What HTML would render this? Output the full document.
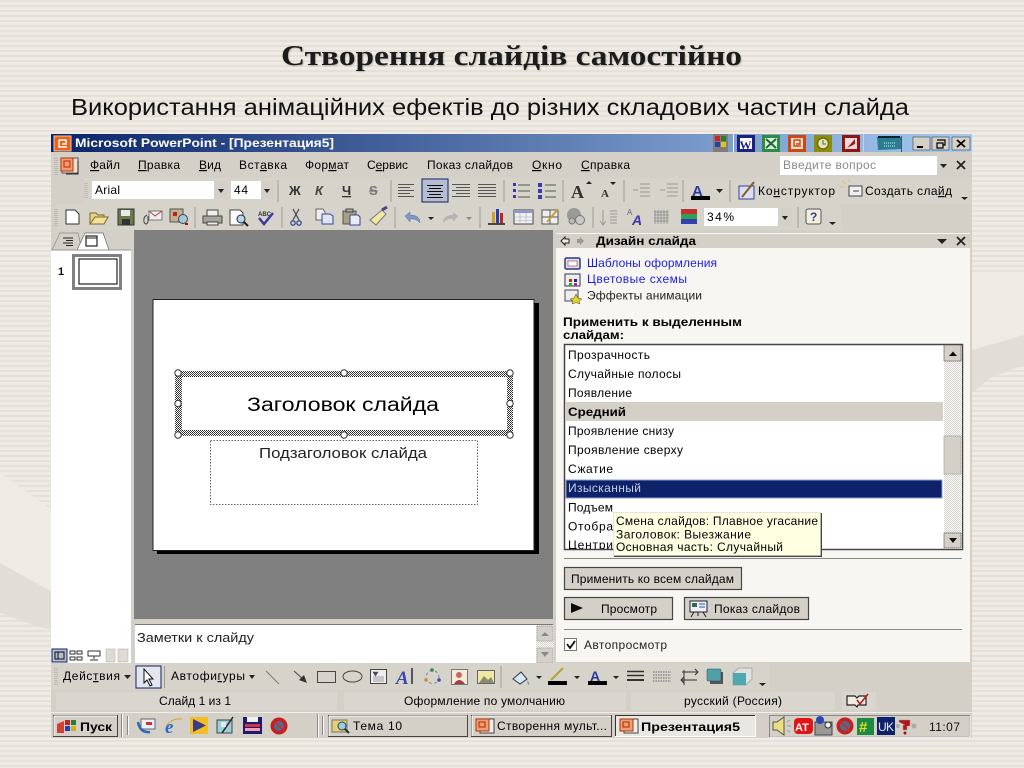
<!DOCTYPE html>
<html><head><meta charset="utf-8"><title>Створення слайдів самостійно</title>
<style>
html,body{margin:0;padding:0;background:#eae6df;width:1024px;height:768px;overflow:hidden}
svg{display:block}
text{font-family:"Liberation Sans","DejaVu Sans",sans-serif;white-space:pre}
.u text{font-size:12px;fill:#000}
</style></head><body>
<svg width="1024" height="768" viewBox="0 0 1024 768" xmlns="http://www.w3.org/2000/svg">
<defs>
<pattern id="st" width="5" height="5" patternUnits="userSpaceOnUse"><rect width="5" height="5" fill="#efebe4"/><rect y="0" width="5" height="2" fill="#e5e0d8"/></pattern>
<pattern id="ht" width="2" height="2" patternUnits="userSpaceOnUse"><rect width="2" height="2" fill="#fff"/><rect width="1" height="1" fill="#222"/><rect x="1" y="1" width="1" height="1" fill="#444"/></pattern>
<pattern id="dt" width="2" height="2" patternUnits="userSpaceOnUse"><rect width="2" height="2" fill="#fff"/><rect width="1" height="1" fill="#d4d0c8"/><rect x="1" y="1" width="1" height="1" fill="#d4d0c8"/></pattern>
<linearGradient id="tb"><stop offset="0" stop-color="#0a246a"/><stop offset="1" stop-color="#a6caf0"/></linearGradient>
<filter id="b" x="0" y="0" width="100%" height="100%"><feGaussianBlur stdDeviation="0.3"/></filter>
<filter id="ts" x="-5%" y="-20%" width="110%" height="140%"><feDropShadow dx="1" dy="1" stdDeviation="0.5" flood-color="#000" flood-opacity=".2"/></filter>
</defs>

<rect width="1024" height="768" fill="url(#st)"/>
<path d="M0 473L52 510V592L0 563Z" fill="#efebe4"/>
<path d="M0 563L52 592V630L36 626L0 613Z" fill="#e2ddd6"/>
<path d="M972 273H1024V335L972 350Z" fill="#efebe4"/>
<path d="M972 350L1024 335V365L990 378L972 393Z" fill="#e2ddd6"/>

<text x="281" y="65" textLength="461" lengthAdjust="spacingAndGlyphs" style="font-family:'Liberation Serif',serif;font-size:29px;font-weight:bold;fill:#1c1c1c" filter="url(#ts)">Створення слайдів самостійно</text>
<text x="71" y="115" textLength="838" lengthAdjust="spacingAndGlyphs" style="font-size:23.5px;fill:#111">Використання анімаційних ефектів до різних складових частин слайда</text>

<g class="u" filter="url(#b)">
<!-- window -->
<rect x="51" y="134" width="921" height="604" fill="#d4d0c8"/>
<rect x="51" y="134" width="921" height="18" fill="url(#tb)"/>
<rect x="54" y="136" width="17" height="15" fill="#e8641c" stroke="#f5c9a0"/><path d="M59 140V147H67M59 140H66V144H62" fill="none" stroke="#fff" stroke-width="1.4"/>
<text x="75" y="147" textLength="259" lengthAdjust="spacingAndGlyphs" style="font-size:12px;font-weight:bold;fill:#fff">Microsoft PowerPoint - [Презентация5]</text>

<rect x="713" y="134" width="15" height="18" fill="#807d78"/><rect x="715" y="136" width="5" height="5" fill="#d02020"/><rect x="721" y="136" width="5" height="5" fill="#208030"/><rect x="715" y="142" width="5" height="5" fill="#2040b0"/><rect x="721" y="142" width="5" height="5" fill="#e0c020"/>
<rect x="733" y="134" width="1" height="18" fill="#fff"/>
<rect x="737" y="135" width="18" height="17" fill="#1a237e"/><rect x="740" y="138" width="12" height="11" fill="#fff"/><text x="739.5" y="149" style="font-size:12px;font-weight:bold;fill:#1a237e;font-family:'Liberation Serif',serif">W</text>
<rect x="762" y="135" width="18" height="17" fill="#2e8b47"/><rect x="765" y="138" width="12" height="11" fill="#dceedd"/><path d="M766 139L776 148M776 139L766 148" stroke="#1d6b34" stroke-width="2"/>
<rect x="788" y="135" width="18" height="17" fill="#c84a16"/><rect x="791" y="138" width="12" height="11" fill="#f4ddc8"/><path d="M794 140V146H801M794 140H800V144H796" fill="none" stroke="#c84a16" stroke-width="1.4"/>
<rect x="814" y="135" width="18" height="17" fill="#8c8c10"/><circle cx="823" cy="143.5" r="5.5" fill="#e4e4c0" stroke="#6c6c10" stroke-width="1.5"/><path d="M823 140V144H826" stroke="#6c6c10" fill="none"/>
<rect x="842" y="135" width="18" height="17" fill="#8a1212"/><rect x="845" y="138" width="12" height="11" fill="#f2d8d8"/><path d="M847 148L855 139L855 144Z" fill="#a01818"/>
<rect x="863" y="134" width="1" height="18" fill="#cfe0f2" opacity=".7"/>
<path d="M877 137H901V149L878 150Z" fill="#2a7e90"/><rect x="878" y="136" width="22" height="2" fill="#123"/><path d="M884 143H895M884 146H895" stroke="#cfe" stroke-dasharray="1 1"/><rect x="901" y="136" width="1" height="16" fill="#456"/>
<g fill="#d4d0c8" stroke="#404040" stroke-width=".6"><rect x="913" y="137" width="17" height="13"/><rect x="932" y="137" width="17" height="13"/><rect x="952" y="137" width="18" height="13"/></g>
<path d="M917 147H923" stroke="#000" stroke-width="2"/><path d="M937 140H945V145H943M937 143H943V148H937Z" fill="none" stroke="#000" stroke-width="1.2"/><path d="M957 140L965 147M965 140L957 147" stroke="#000" stroke-width="1.8"/>

<!-- menu bar -->
<path d="M55 158V175M57 158V175" stroke="#a8a49c" stroke-dasharray="1 1"/>
<rect x="62" y="158" width="16" height="15" fill="#f6e0d0" stroke="#555"/><rect x="61" y="158" width="12" height="13" fill="#f0a070" stroke="#b03010"/><rect x="64" y="161" width="6" height="6" fill="none" stroke="#c02010"/><path d="M78 161V174H66" stroke="#222" fill="none"/>
<text x="90" y="169" textLength="30"><tspan text-decoration="underline">Ф</tspan>айл</text>
<text x="138" y="169" textLength="42"><tspan text-decoration="underline">П</tspan>равка</text>
<text x="199" y="169" textLength="22"><tspan text-decoration="underline">В</tspan>ид</text>
<text x="239" y="169" textLength="48">Вст<tspan text-decoration="underline">а</tspan>вка</text>
<text x="305" y="169" textLength="44">Фор<tspan text-decoration="underline">м</tspan>ат</text>
<text x="367" y="169" textLength="41">С<tspan text-decoration="underline">е</tspan>рвис</text>
<text x="427" y="169" textLength="86">Показ слай<tspan text-decoration="underline">д</tspan>ов</text>
<text x="532" y="169" textLength="30"><tspan text-decoration="underline">О</tspan>кно</text>
<text x="581" y="169" textLength="49"><tspan text-decoration="underline">С</tspan>правка</text>
<rect x="780" y="156" width="157" height="19" fill="#fff"/>
<text x="783" y="169" textLength="93" style="fill:#8a8a8a">Введите вопрос</text>
<rect x="937" y="156" width="13" height="19" fill="#d4d0c8"/><path d="M940 164H947L943.500 168Z" fill="#222"/>
<path d="M957 161L965 169M965 161L957 169" stroke="#222" stroke-width="1.8"/>

<!-- toolbar 2 -->
<rect x="84" y="178" width="888" height="26" fill="#d6d3cb"/>
<path d="M85 183V199M87 183V199" stroke="#a8a49c" stroke-dasharray="1 1"/>
<rect x="92" y="181" width="136" height="18" fill="#fff"/><text x="95" y="194" textLength="25">Arial</text>
<rect x="214" y="181" width="14" height="18" fill="#d4d0c8"/><path d="M218 189H224L221 193Z" fill="#222"/>
<rect x="231" y="181" width="43" height="18" fill="#fff"/><text x="234" y="194" textLength="14">44</text>
<rect x="261" y="181" width="13" height="18" fill="#d4d0c8"/><path d="M264 189H270L267 193Z" fill="#222"/>
<path d="M278 180V202M391 180V202M504 180V202M563 180V202M624 180V202M683 180V202M730 180V202" stroke="#a09c94"/>
<text x="289" y="195" style="font-size:13px;font-weight:bold;fill:#333">Ж</text>
<text x="315" y="195" style="font-size:13px;font-weight:bold;font-style:italic;fill:#444">К</text>
<text x="342" y="195" style="font-size:13px;font-weight:bold;fill:#333" text-decoration="underline">Ч</text>
<text x="369" y="195" style="font-size:13px;font-weight:bold;fill:#777" text-decoration="line-through">S</text>
<g stroke="#555" stroke-width="1"><path d="M398 184.500H414M398 187.500H410M398 190.500H414M398 193.500H410M398 196.500H414"/>
<rect x="422" y="179" width="26" height="23" fill="#b7bdd0" stroke="#0a246a"/>
<path d="M427 185.500H443M429 188.500H441M427 191.500H443M429 194.500H441M427 197.500H443" stroke="#111"/>
<path d="M452 184.500H470M456 187.500H470M452 190.500H470M456 193.500H470M452 196.500H470"/>
<path d="M478 184.500H496M478 187.500H496M478 190.500H496M478 193.500H496M478 196.500H496"/>
<path d="M518 185H530M518 191H530M518 197H530M538 185"/></g>
<rect x="513" y="183" width="3" height="3" fill="#3a3aa0"/><rect x="513" y="189" width="3" height="3" fill="#3a3aa0"/><rect x="513" y="195" width="3" height="3" fill="#3a3aa0"/>
<rect x="538" y="183" width="4" height="4" fill="#3a3ab0"/><rect x="538" y="189" width="4" height="4" fill="#3a3ab0"/><rect x="538" y="195" width="4" height="4" fill="#3a3ab0"/>
<path d="M545 185H556M545 191H556M545 197H556" stroke="#555"/>
<text x="571" y="198" style="font-size:18px;font-weight:bold;font-family:'Liberation Serif',serif;fill:#333">A</text><path d="M586 184L589 181L592 184" fill="#222"/>
<text x="601" y="197" style="font-size:11px;font-weight:bold;font-family:'Liberation Serif',serif;fill:#333">A</text><path d="M610 182H616L613 185Z" fill="#222"/>
<g stroke="#9a9890"><path d="M640 184H650M640 188H650M640 192H650M640 196H650M633 190H638M667 184H678M667 188H678M667 192H678M667 196H678M660 190H665"/></g>
<text x="692" y="196" style="font-size:15px;fill:#2a3a9a;font-weight:bold">A</text><rect x="691" y="196" width="19" height="4" fill="#000"/><path d="M716 189H723L719.500 193Z" fill="#222"/>
<rect x="739" y="186" width="15" height="13" fill="#d8dff0" stroke="#3a3aa0"/><path d="M742 197L754 182" stroke="#8a5a20" stroke-width="2"/>
<text x="758" y="195" textLength="77">Ко<tspan text-decoration="underline">н</tspan>структор</text>
<rect x="849" y="186" width="13" height="10" fill="#f0f0f0" stroke="#444"/><path d="M846 184L842 181M849 182L849 179M844 187H840" stroke="#e0c060"/><path d="M853 191H859" stroke="#444"/>
<text x="865" y="195" textLength="87">Создать сла<tspan text-decoration="underline">й</tspan>д</text>
<path d="M961 197H968L964.500 200Z" fill="#222"/>

<!-- toolbar 3 -->
<rect x="57" y="204" width="784" height="26" fill="#d6d3cb"/>
<path d="M55 209V226M57 209V226" stroke="#a8a49c" stroke-dasharray="1 1"/>
<path d="M66 210H75L79 214V224H66Z" fill="#fff" stroke="#333"/>
<path d="M90 224V213H96L98 215H104V224Z" fill="#e6d48a" stroke="#7a6a20"/><path d="M90 224L95 217H108L104 224Z" fill="#f2e2a0" stroke="#7a6a20"/>
<rect x="118" y="209" width="16" height="16" fill="#6a7a48" stroke="#333"/><rect x="121" y="210" width="9" height="6" fill="#e8e8e8"/><rect x="122" y="219" width="8" height="6" fill="#333"/>
<rect x="149" y="211" width="13" height="9" fill="#eee" stroke="#777"/><path d="M149 211L155 216L162 211" stroke="#a44" fill="none"/><path d="M147 215Q143 217 144 222Q146 226 148 222V216" fill="none" stroke="#444"/>
<rect x="170" y="209" width="13" height="13" fill="#c0b090" stroke="#555"/><rect x="173" y="212" width="4" height="4" fill="#c02020"/><circle cx="183" cy="219" r="4.500" fill="#a0c8d8" stroke="#444"/><rect x="185" y="223" width="3" height="2" fill="#c00"/>
<path d="M195 207V228M282 207V228M395 207V228M480 207V228M593 207V228M798 207V228" stroke="#a09c94"/>
<rect x="203" y="216" width="19" height="7" fill="#a8a49c" stroke="#444"/><rect x="207" y="210" width="11" height="6" fill="#eee" stroke="#444"/><rect x="207" y="222" width="11" height="3" fill="#eee" stroke="#444"/>
<path d="M230 210H240L243 213V225H230Z" fill="#fff" stroke="#444"/><circle cx="241" cy="219" r="4" fill="#b8d8e8" stroke="#224"/><path d="M244 222L248 226" stroke="#222" stroke-width="2"/>
<text x="258" y="216" style="font-size:6px;fill:#333;font-weight:bold">ABC</text><path d="M259 218L264 224L273 213" fill="none" stroke="#3a3aa0" stroke-width="2.500"/>
<path d="M293 209L299 220M299 209L293 220" stroke="#444" stroke-width="1.200"/><circle cx="293" cy="223" r="2.200" fill="none" stroke="#334a90" stroke-width="1.300"/><circle cx="299" cy="223" r="2.200" fill="none" stroke="#334a90" stroke-width="1.300"/>
<path d="M316 209H323L325 212V220H316Z" fill="#eee" stroke="#666"/><path d="M322 214H330L333 216V224H322Z" fill="#dfe4f0" stroke="#38469a"/>
<rect x="343" y="211" width="13" height="13" fill="#a8a080" stroke="#555"/><rect x="346" y="209" width="7" height="3" fill="#aaa" stroke="#444"/><path d="M350 215H358L360 217V225H350Z" fill="#e8ecf4" stroke="#38469a"/>
<path d="M370 220L382 210L386 214L376 225Z" fill="#f0e8a0" stroke="#777"/><path d="M382 210L387 207" stroke="#3a4a90" stroke-width="3"/>
<path d="M405 216L410 212V215Q420 215 420 223Q416 218 410 219V222Z" fill="#8098c8" stroke="#5a70a0" stroke-width=".5"/><path d="M428 217H434L431 220Z" fill="#222"/>
<path d="M458 216L453 212V215Q443 215 443 223Q447 218 453 219V222Z" fill="#b4b4b4"/><path d="M466 217H472L469 220Z" fill="#888"/>
<rect x="492" y="212" width="3" height="11" fill="#d0a020"/><rect x="496" y="209" width="3" height="14" fill="#2a3ab0"/><rect x="500" y="213" width="3" height="10" fill="#c02020"/><path d="M488 224H505" stroke="#444" stroke-width="2"/>
<rect x="514" y="210" width="19" height="14" fill="#f0f0f4" stroke="#444"/><rect x="514" y="210" width="19" height="3" fill="#9098c0"/><path d="M514 217H533M514 220.500H533M520 213V224M526 213V224" stroke="#aaa" stroke-width=".6"/>
<rect x="542" y="210" width="16" height="14" fill="#eee" stroke="#555"/><path d="M550 210V224M542 217H558" stroke="#555"/><path d="M547 222L558 209" stroke="#c8a030" stroke-width="2"/>
<circle cx="574" cy="215" r="7" fill="#9a9a9a"/><circle cx="580" cy="220" r="4.500" fill="#c8c8c8" stroke="#777"/><circle cx="572" cy="221" r="3" fill="#bbb" stroke="#777"/>
<path d="M603 210V224M600 221L603 225L606 221M610 211H617M610 214H617M610 217H617M610 220H617M610 223H617" fill="none" stroke="#999"/>
<text x="627" y="215" style="font-size:8px;fill:#667">A</text><text x="632" y="225" style="font-size:14px;font-weight:bold;font-style:italic;fill:#3a3aa0">A</text>
<path d="M655 210V224M658 210V224M661 210V224M664 210V224M667 210V224M654 212H669M654 215H669M654 218H669M654 221H669" stroke="#888" stroke-width=".8"/>
<rect x="681" y="209" width="16" height="5" fill="#c03030"/><rect x="681" y="214" width="16" height="5" fill="#30a050"/><rect x="681" y="219" width="16" height="5" fill="#3040b0"/>
<rect x="704" y="208" width="88" height="18" fill="#fff"/><text x="707" y="221" textLength="27">34%</text>
<rect x="778" y="208" width="14" height="18" fill="#d4d0c8"/><path d="M782 216H788L785 220Z" fill="#222"/>
<rect x="806" y="209" width="15" height="15" rx="2" fill="#f4f0d8" stroke="#556"/><text x="810" y="221" style="font-size:12px;font-weight:bold;fill:#2a3a9a">?</text>
<path d="M829 222H836L832.500 225Z" fill="#222"/>

<!-- main -->
<rect x="51" y="250" width="80" height="413" fill="#fff"/>
<path d="M52 250L60 233H78L82 250Z" fill="#d4d0c8" stroke="#888" stroke-width=".7"/>
<path d="M77 250L85 233H103L109 250Z" fill="#fff" stroke="#666" stroke-width=".7"/>
<path d="M63 238H73M66 240.500H73M63 243H73M66 245.500H73" stroke="#222"/>
<rect x="86" y="236" width="11" height="10" fill="#fff" stroke="#222" stroke-width="1.200"/><path d="M86 238H97" stroke="#222"/>
<path d="M51 250H131" stroke="#9a968e"/>
<text x="58" y="275" style="font-size:11px;font-weight:bold;fill:#111">1</text>
<rect x="73.500" y="255.500" width="47" height="33" fill="#fff" stroke="#808080" stroke-width="3"/>
<rect x="79" y="259" width="38" height="25" fill="#fff" stroke="#222" stroke-width="1.200"/>

<rect x="134" y="230" width="419" height="389" fill="#808080"/>
<rect x="157" y="303" width="382" height="251" fill="#000"/>
<rect x="153" y="299.500" width="381" height="251" fill="#fff" stroke="#222"/>
</g>
<rect x="175" y="371" width="338" height="65" fill="url(#ht)"/>
<rect x="182" y="377" width="325" height="53" fill="#fff"/>
<g class="u" filter="url(#b)">
<g fill="#fff" stroke="#333"><circle cx="178" cy="373" r="3.200"/><circle cx="344" cy="373" r="3.200"/><circle cx="510" cy="373" r="3.200"/><circle cx="178" cy="403.500" r="3.200"/><circle cx="510" cy="403.500" r="3.200"/><circle cx="178" cy="435" r="3.200"/><circle cx="344" cy="435" r="3.200"/><circle cx="510" cy="435" r="3.200"/></g>
<text x="247" y="411" textLength="192" lengthAdjust="spacingAndGlyphs" style="font-size:19px;fill:#000">Заголовок слайда</text>
<rect x="210.500" y="440.500" width="267" height="64" fill="none" stroke="#666" stroke-dasharray="1.500 1.500"/>
<text x="259" y="458" textLength="168" lengthAdjust="spacingAndGlyphs" style="font-size:15px;fill:#222">Подзаголовок слайда</text>

<rect x="135" y="625" width="401" height="38" fill="#fff"/><path d="M135 624.500H553" stroke="#777"/>
<text x="137" y="642" textLength="117" lengthAdjust="spacingAndGlyphs" style="font-size:13px;fill:#222">Заметки к слайду</text>
<rect x="536" y="625" width="18" height="38" fill="url(#dt)"/>
<rect x="537" y="626" width="16" height="15" fill="#d4d0c8" stroke="#999" stroke-width=".5"/><rect x="537" y="648" width="16" height="15" fill="#d4d0c8" stroke="#999" stroke-width=".5"/>
<path d="M541 636H549L545 632Z" fill="#888"/><path d="M541 652H549L545 657Z" fill="#888"/>

<rect x="52" y="649" width="15" height="13" fill="#b7bdd0" stroke="#0a246a"/><path d="M55 652H64V659H55ZM58 652V659" fill="none" stroke="#111"/>
<rect x="70" y="651" width="5" height="3" fill="none" stroke="#333"/><rect x="77" y="651" width="5" height="3" fill="none" stroke="#333"/><rect x="70" y="657" width="5" height="3" fill="none" stroke="#333"/><rect x="77" y="657" width="5" height="3" fill="none" stroke="#333"/>
<path d="M88 651H100V656H88ZM94 656V659M90 660H98" fill="none" stroke="#333"/>
<rect x="106" y="649" width="9" height="13" fill="#dedbd4" stroke="#aaa" stroke-width=".5"/><rect x="118" y="649" width="10" height="13" fill="#dedbd4" stroke="#aaa" stroke-width=".5"/>

<!-- task pane -->
<rect x="556" y="233" width="414" height="429" fill="#f7f6f2"/>
<rect x="556" y="234" width="414" height="14" fill="#d4d0c8"/>
<path d="M561 241L565 237V239H569V243H565V245Z" fill="#eee" stroke="#222"/>
<path d="M584 241L580 237V239H577V243H580V245Z" fill="#999"/>
<text x="596" y="245" textLength="100" lengthAdjust="spacingAndGlyphs" style="font-weight:bold;font-size:12px;fill:#000">Дизайн слайда</text>
<path d="M937 239H947L942 244Z" fill="#222"/><path d="M957 237L965 245M965 237L957 245" stroke="#222" stroke-width="1.800"/>

<rect x="565" y="258" width="15" height="11" rx="1.500" fill="#dde" stroke="#2a3a7a" stroke-width="1.500"/><rect x="568" y="261" width="9" height="5" fill="#fff" stroke="#a33" stroke-width=".6"/>
<text x="587" y="267" textLength="130" style="fill:#1c1ce0">Шаблоны оформления</text>
<rect x="565" y="274" width="15" height="12" fill="#eee" stroke="#335"/><rect x="569" y="279" width="3" height="3" fill="#c22"/><rect x="574" y="279" width="3" height="3" fill="#22a"/><rect x="569" y="283" width="3" height="3" fill="#2a2"/><rect x="574" y="283" width="3" height="3" fill="#a2a"/>
<text x="587" y="283" textLength="100" style="fill:#1c1ce0">Цветовые схемы</text>
<rect x="565" y="290" width="13" height="11" fill="#eee" stroke="#445"/><path d="M576 294L578 298L582 299L579 301L580 304L576 302.500L572 304L573 301L570 299L574 298Z" fill="#e8d020" stroke="#444" stroke-width=".5"/>
<text x="587" y="299.500" textLength="115" style="fill:#222">Эффекты анимации</text>
<text x="563" y="326" textLength="179" lengthAdjust="spacingAndGlyphs" style="font-weight:bold;fill:#000">Применить к выделенным</text>
<text x="563" y="339" textLength="61" lengthAdjust="spacingAndGlyphs" style="font-weight:bold;fill:#000">слайдам:</text>

<rect x="564.500" y="344.500" width="398" height="205" fill="#fff" stroke="#444" stroke-width="1.500"/>
<rect x="566" y="402" width="377" height="19" fill="#d4d0c8"/>
<rect x="566" y="480" width="376" height="18" fill="#0a246a" stroke="#8aa0cc"/>
<text x="568" y="359" textLength="82">Прозрачность</text>
<text x="568" y="378" textLength="113">Случайные полосы</text>
<text x="568" y="397" textLength="64">Появление</text>
<text x="568" y="416" textLength="58" lengthAdjust="spacingAndGlyphs" style="font-weight:bold;fill:#000">Средний</text>
<text x="568" y="435" textLength="106">Проявление снизу</text>
<text x="568" y="454" textLength="115">Проявление сверху</text>
<text x="568" y="473" textLength="45">Сжатие</text>
<text x="568" y="492" textLength="73" style="fill:#c8d0e4">Изысканный</text>
<text x="568" y="511.500" textLength="45">Подъем</text>
<text x="568" y="530.500" textLength="45">Отобра</text>
<svg x="566" y="540" width="60" height="9"><text x="2" y="9" textLength="45">Центри</text></svg>
<rect x="944" y="346" width="18" height="203" fill="url(#dt)"/>
<rect x="944" y="345" width="17" height="16" fill="#d4d0c8" stroke="#555" stroke-width=".6"/><path d="M949 356H957L953 351.500Z" fill="#111"/>
<rect x="944" y="436" width="17" height="38" fill="#d4d0c8" stroke="#999" stroke-width=".6"/>
<rect x="944" y="533" width="17" height="15" fill="#d4d0c8" stroke="#555" stroke-width=".6"/><path d="M949 538H957L953 543Z" fill="#111"/>

<rect x="614" y="513" width="208" height="44" fill="#444"/>
<rect x="613.500" y="512.500" width="207" height="43" fill="#ffffe1" stroke="#ccc" stroke-width=".5"/>
<text x="616" y="525" textLength="202">Смена слайдов: Плавное угасание</text>
<text x="616" y="538.500" textLength="135">Заголовок: Выезжание</text>
<text x="616" y="551" textLength="167">Основная часть: Случайный</text>

<path d="M564 558.500H962M564 629.500H962" stroke="#888"/>
<g fill="#d4d0c8" stroke="#444" stroke-width="1.200"><rect x="564.500" y="567.500" width="177" height="22"/><rect x="564.500" y="597.500" width="108" height="22"/><rect x="684.500" y="597.500" width="124" height="22"/></g>
<text x="571" y="583" textLength="163">Применить ко всем слайдам</text>
<path d="M571 603V613L583 608Z" fill="#111"/>
<text x="601" y="613" textLength="56">Просмотр</text>
<rect x="690" y="601" width="17" height="11" fill="#eef" stroke="#222"/><path d="M694 612L691 617M703 612L706 617M698 612V616" stroke="#222"/><rect x="692" y="603" width="5" height="4" fill="#2a6a4a"/><path d="M699 604H705M699 607H705" stroke="#3355aa"/>
<text x="714" y="613" textLength="86">Показ слайдов</text>
<rect x="564.500" y="638.500" width="12" height="12" fill="#fff" stroke="#777"/><path d="M567 644L570 648L575 641" fill="none" stroke="#111" stroke-width="1.800"/>
<text x="584" y="649" textLength="83" style="fill:#222">Автопросмотр</text>

<!-- drawing -->
<rect x="51" y="663" width="718" height="27" fill="#d6d3cb"/>
<path d="M55 668V685M57 668V685" stroke="#a8a49c" stroke-dasharray="1 1"/>
<text x="63" y="680" textLength="57">Дейс<tspan text-decoration="underline">т</tspan>вия</text><path d="M124 675H131L127.500 679Z" fill="#222"/>
<rect x="136" y="666" width="25" height="22" fill="#e4e6ee" stroke="#0a246a"/><path d="M144 669V683L147 680L150 686L152 685L149 679L153 679Z" fill="#fff" stroke="#111"/>
<path d="M164.500 666V688M501 666V688" stroke="#a09c94"/>
<text x="171" y="680" textLength="74">Автофи<tspan text-decoration="underline">г</tspan>уры</text><path d="M249 675H255L252 679Z" fill="#222"/>
<path d="M266 671L279 684" stroke="#777"/><path d="M294 671L304 680" stroke="#444"/><path d="M307 683L299 680L304 675Z" fill="#333"/>
<rect x="317.500" y="671.500" width="18" height="11" fill="none" stroke="#444"/><ellipse cx="352.500" cy="676.500" rx="9.500" ry="5.500" fill="none" stroke="#444"/>
<rect x="370.500" y="669.500" width="16" height="14" fill="#eee" stroke="#444"/><path d="M373 672H378L375.500 676ZM373 677H384M373 679H384M373 681H384" fill="#445" stroke="#556" stroke-width=".6"/>
<text x="396" y="684" style="font-size:19px;font-weight:bold;font-style:italic;font-family:'Liberation Serif',serif;fill:#3a4aaa">A</text><path d="M412 668V684" stroke="#556" stroke-width="2"/>
<circle cx="432.500" cy="677" r="6.500" fill="none" stroke="#789" stroke-dasharray="3 2.500"/><circle cx="432" cy="670" r="1.800" fill="#2a8a4a"/><circle cx="426" cy="680" r="1.800" fill="#c84"/><circle cx="439" cy="680" r="1.800" fill="#44a"/>
<rect x="451.500" y="669.500" width="16" height="15" fill="#f4ecd8" stroke="#777"/><circle cx="459" cy="675" r="3" fill="#c66"/><path d="M454 684Q459 676 465 684Z" fill="#a04040"/>
<rect x="477.500" y="670.500" width="17" height="13" fill="#f0e8a0" stroke="#666"/><path d="M479 683L484 676L488 680L491 677L494 683Z" fill="#8a8a70"/>
<path d="M513 679L521 672L527 679L520 684Z" fill="#d8e8f0" stroke="#335"/><path d="M527 680Q531 684 528 685Z" fill="#6ab"/><path d="M536 676H542L539 679Z" fill="#222"/>
<path d="M551 680L563 668" stroke="#b8a030" stroke-width="2"/><rect x="548" y="681" width="19" height="4" fill="#000"/><path d="M574 676H580L577 679Z" fill="#222"/>
<text x="590" y="681" style="font-size:14px;font-weight:bold;fill:#2a3a9a">A</text><rect x="588" y="681" width="19" height="4" fill="#000"/><path d="M613 676H619L616 679Z" fill="#222"/>
<path d="M627 671.500H644M627 675.500H644" stroke="#333" stroke-width="1.600"/><path d="M627 680H644" stroke="#333" stroke-width="2"/>
<path d="M653 672H671M653 675H671M653 678H671M653 681H671" stroke="#666" stroke-dasharray="1.500 1"/>
<path d="M682 672H697M682 680H697M695 669L698 672L695 675M684 677L681 680L684 683M684 685V670" stroke="#333" fill="none"/>
<rect x="710" y="672" width="13" height="12" fill="#555"/><rect x="707" y="669" width="14" height="12" rx="1" fill="#50a0a8" stroke="#345" stroke-width=".5"/>
<path d="M733 673L739 668H752V679L746 685H733Z" fill="#e0e0e0" stroke="#aaa"/><rect x="733" y="673" width="13" height="12" fill="#50a8b0"/>
<path d="M759 683H766L762.500 686Z" fill="#222"/>

<!-- status -->
<g fill="#d9d6cf"><rect x="56" y="692" width="281" height="18"/><rect x="344" y="692" width="282" height="18"/><rect x="631" y="692" width="204" height="18"/><rect x="842" y="692" width="34" height="18"/></g>
<text x="159" y="705" textLength="72">Слайд 1 из 1</text>
<text x="404" y="705" textLength="161">Оформление по умолчанию</text>
<text x="684" y="705" textLength="98">русский (Россия)</text>
<path d="M847 696H855L857 698L859 696H866V705H858L857 707L855 705H847Z" fill="#f0ece0" stroke="#222" stroke-width="1.200"/><path d="M857 700L860 704L868 694" fill="none" stroke="#b01818" stroke-width="1.500"/>

<!-- taskbar -->
<rect x="51" y="712" width="921" height="26" fill="#d4d0c8"/>
<path d="M51 712.500H972" stroke="#f0eee8"/>
<rect x="53.500" y="715.500" width="64" height="21" fill="#d4d0c8" stroke="#444"/><path d="M54 716H117M54 716V736" stroke="#fff"/>
<path d="M57 724L64 721V733L57 733Z" fill="#d04030"/><rect x="65" y="720" width="5" height="5" fill="#c02020"/><rect x="71" y="720" width="5" height="5" fill="#208030"/><rect x="65" y="726" width="5" height="5" fill="#2040b0"/><rect x="71" y="726" width="5" height="5" fill="#d0b020"/>
<text x="80" y="731" textLength="32" lengthAdjust="spacingAndGlyphs" style="font-weight:bold;font-size:12px;fill:#000">Пуск</text>
<path d="M121.500 714V737M127.500 716V735M317.500 714V737M322.500 716V735" stroke="#8a8680"/><path d="M122.500 714V737M128.500 716V735M318.500 714V737M323.500 716V735" stroke="#fff"/>
<rect x="141" y="719" width="14" height="10" fill="#eef" stroke="#666"/><path d="M138 722Q140 733 150 732" stroke="#2a6ab0" stroke-width="2.500" fill="none"/><rect x="146" y="722" width="6" height="3" fill="#c33"/>
<text x="165" y="733" style="font-size:19px;font-weight:bold;font-style:italic;fill:#2a6ac8;font-family:'Liberation Serif',serif">e</text><path d="M166 726Q172 718 182 719" stroke="#d8a020" fill="none"/>
<rect x="190" y="717" width="18" height="17" fill="#f0c020"/><path d="M193 719V732L206 725.500Z" fill="#3a3a8a"/>
<rect x="217" y="720" width="15" height="13" fill="#9ad0d8" stroke="#444"/><path d="M222 733L233 717" stroke="#222" stroke-width="1.500"/><rect x="221" y="722" width="5" height="5" fill="#e8e8f0"/>
<rect x="243" y="717" width="19" height="17" fill="#1a1a6a"/><rect x="247" y="717" width="11" height="5" fill="#f0f0f0"/><rect x="245" y="724" width="15" height="3" fill="#d03050"/><rect x="245" y="728" width="15" height="3" fill="#f0a0b0"/>
<circle cx="279" cy="726" r="8.500" fill="#c02020"/><circle cx="279" cy="726" r="5" fill="#556a8a"/><path d="M273 720L285 732" stroke="#e02020" stroke-width="1.500"/>
<rect x="328.500" y="715.500" width="139" height="21" fill="#d4d0c8" stroke="#444"/><path d="M329 716H467M329 716V736" stroke="#fff"/>
<rect x="471.500" y="715.500" width="140" height="21" fill="#d4d0c8" stroke="#444"/><path d="M472 716H611M472 716V736" stroke="#fff"/>
<rect x="615.500" y="715.500" width="140" height="21" fill="#e9e7e1" stroke="#fff"/><path d="M615.500 736V715.500H755" stroke="#333" fill="none"/>
<path d="M332 720H347V732H332Z" fill="#e6d070" stroke="#776"/><circle cx="342" cy="726" r="4" fill="#9cd" stroke="#246"/><path d="M345 729L349 733" stroke="#234" stroke-width="2"/>
<text x="353" y="730" textLength="49">Тема 10</text>
<rect x="480" y="719" width="14" height="14" fill="#eee" stroke="#444"/><rect x="476" y="719" width="13" height="12" fill="#f0a070" stroke="#b03010"/><rect x="479" y="722" width="6" height="5" fill="none" stroke="#b02010"/>
<text x="497" y="730" textLength="110">Створення мульт...</text>
<rect x="624" y="719" width="14" height="14" fill="#eee" stroke="#444"/><rect x="620" y="719" width="13" height="12" fill="#f0a070" stroke="#b03010"/><rect x="623" y="722" width="6" height="5" fill="none" stroke="#b02010"/>
<text x="641" y="731" textLength="99" lengthAdjust="spacingAndGlyphs" style="font-weight:bold;fill:#000;font-size:12px">Презентация5</text>
<rect x="769.500" y="715.500" width="200" height="21" fill="#d4d0c8" stroke="#888"/><path d="M770 737H970V716" stroke="#fff" fill="none"/>
<path d="M773 722H777L784 717V735L777 730H773Z" fill="#e8e080" stroke="#555"/><path d="M787 722L790 720M787 726H791M787 730L790 732" stroke="#999"/>
<rect x="794" y="718" width="19" height="16" rx="4" fill="#e01818"/><text x="795" y="731" style="font-size:11px;font-weight:bold;fill:#fff">AT</text>
<rect x="815" y="722" width="17" height="13" fill="#999" stroke="#444"/><circle cx="820" cy="720" r="4" fill="#2a4ab0"/><circle cx="828" cy="725" r="3" fill="#eee" stroke="#333"/>
<circle cx="845" cy="726" r="8.500" fill="#c02020"/><circle cx="845" cy="726" r="5" fill="#556a8a"/><path d="M839 720L851 732" stroke="#e02020" stroke-width="1.500"/>
<rect x="857" y="718" width="17" height="17" fill="#1a8a40"/><text x="859" y="732" style="font-size:15px;font-weight:bold;fill:#e0e020">#</text>
<rect x="877" y="717" width="18" height="18" fill="#10206a"/><text x="878" y="731" textLength="16" style="font-size:12px;fill:#e8e8f0">UK</text>
<path d="M899 720H910V726H907V730H903V725H905L899 722Z" fill="#b01818" stroke="#999" stroke-width=".5"/><circle cx="898" cy="726" r="2" fill="#aaa"/><circle cx="914" cy="726" r="2.500" fill="#aaa"/><circle cx="905" cy="733" r="1.500" fill="#a11"/>
<text x="929" y="731" textLength="31" style="fill:#111">11:07</text>
</g>
</svg>
</body></html>
